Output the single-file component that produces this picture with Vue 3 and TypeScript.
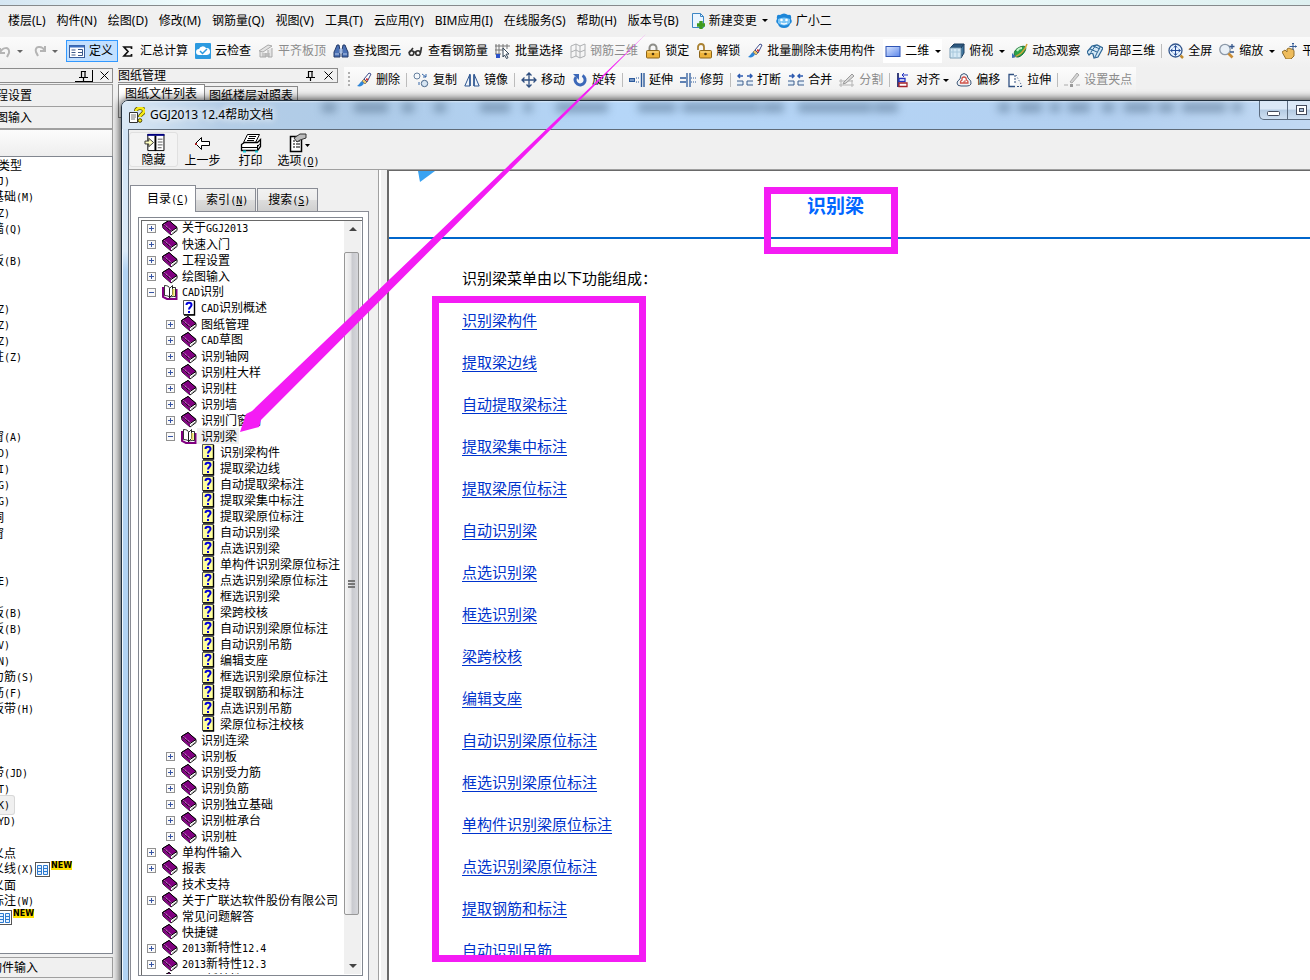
<script setup lang="ts">
import { h, ref } from 'vue'

interface Tool {
  label: string
  icon: string
  caret?: boolean
  off?: boolean
  sep?: boolean
  group?: boolean
}

interface Node {
  label: string
  depth: number
  kind: 'book' | 'open' | 'page' | 'newpage'
  sign?: '+' | '-'
}

const Mixed = (props: { text: string }) =>
  (props.text.match(/[\x20-\x7e]+|[^\x20-\x7e]+/g) ?? []).map((run) =>
    /^[\x20-\x7e]/.test(run) ? h('span', { class: 'mono' }, run) : run,
  )
Mixed.props = ['text']

const brush =
  '<path d="M1 14c3 1 6 0 7-3l-2-2c-2 1-2 3-5 5z" fill="#2f86d8"/><path d="M6 9l2-2 3 3-2 2z" fill="#e9c46a" stroke="#555" stroke-width=".6"/><path d="M8 7l5-6 2 1-4 8z" fill="#fff" stroke="#3b4a8a"/><path d="M10 7l2 1" stroke="#c33" stroke-width="2"/>'

const icons: Record<string, string> = {
  undo: '<path d="M3 5v5h5M3 10c2-6 10-7 9 0l-2 4" fill="none" stroke="#b4b4b4" stroke-width="2"/>',
  redo: '<path d="M13 3v5H8M13 8C10 2 2 3 4 9l2 4" fill="none" stroke="#b4b4b4" stroke-width="2"/>',
  define:
    '<rect x=".5" y="2.500" width="15" height="12" fill="#fff" stroke="#3a5f9c"/><path d="M1 3.500h14" stroke="#3a6fc0" stroke-width="2"/><path d="M2.500 7h4M2.500 9.500h4M2.500 12h4M9 6.500h4.500v6H9M9 9.500h4" fill="none" stroke="#3d5a8a"/>',
  sigma: '<path d="M11.500 6V4H4l4 4.500L4 13h7.500v-2" fill="none" stroke="#111" stroke-width="1.700"/>',
  cloud:
    '<rect width="16" height="16" rx="1" fill="#2c9ae0"/><path d="M4 12a3 3 0 0 1 0-6 4 4 0 0 1 7-1 3.500 3.500 0 0 1 1 7z" fill="#fff"/><path d="M5 8l2.500 2.500L12 6" fill="none" stroke="#2c9ae0" stroke-width="1.500"/>',
  slab: '<path d="M1 8l9-6 4 1-9 6zM2 9v5h6v-4M10 7v7h4V5M4 11h8M4 13h8" fill="#e4e4e4" stroke="#a9a9a9"/>',
  find: '<path d="M2 7l2-5h2l1 5v7H1V9zM14 7l-2-5h-2L9 7v7h6V9z" fill="#4a70b4" stroke="#253a68"/><path d="M7 6h2v4H7zM2 11h4M10 11h4" fill="#8aa8d8" stroke="#b9cbe8"/>',
  glasses:
    '<g fill="none" stroke="#333" stroke-width="1.600"><circle cx="3.500" cy="10" r="2.300"/><circle cx="10" cy="10" r="2.300"/><path d="M1 10l4-5M12.500 10l1-6M6 9h2"/></g>',
  batch:
    '<path d="M1 1v10M4 1v13M8 1v5M12 1v5M0 3h15M0 7h9M0 11h6" stroke="#777"/><rect x="1" y="11" width="4" height="4" fill="#2a51c9"/><path d="M8 5l6 6-3 .2 2 3.500-1.500.8-2-3.500L8 14z" fill="#fff" stroke="#345"/>',
  grid3d: '<path d="M1 3l5-2v12l-5 2zM6 1l4 2v12l-4-2M10 3l5-2v12l-5 2M1 9l5-2 4 2 5-2" fill="none" stroke="#aeb0b2"/>',
  lock: '<path d="M4.500 8V5a3.500 3.500 0 0 1 7 0v3" fill="none" stroke="#8d8d88" stroke-width="2"/><rect x="1.500" y="7.500" width="13" height="7.500" rx="1" fill="#eeb33a" stroke="#8d6518"/><path d="M2.500 9h11" stroke="#fde39b"/><circle cx="8" cy="11" r="1.300" fill="#4c3510"/>',
  unlock:
    '<path d="M2 7V4a2.500 2.500 0 0 1 6 0v3" fill="none" stroke="#a98132" stroke-width="1.800"/><rect x="3.500" y="7.500" width="12" height="7.500" rx="1" fill="#eeb33a" stroke="#8d6518"/><path d="M4.500 9h10" stroke="#fde39b"/><circle cx="9.500" cy="11" r="1.300" fill="#4c3510"/>',
  brush,
  rect: '<defs><linearGradient id="rg" x2="1" y2="1"><stop stop-color="#dce8ff"/><stop offset="1" stop-color="#5b86ea"/></linearGradient></defs><rect x="1" y="3.500" width="14" height="10" fill="url(#rg)" stroke="#2f55b5"/>',
  cube: '<path d="M1 5l4-4h10l-3 4z" fill="#2c587f" stroke="#1d3d5e"/><path d="M12 5l3-4v9l-3 5z" fill="#3f779f" stroke="#1d3d5e"/><path d="M1 5h11v10H1z" fill="#d6e9f5" stroke="#7b9db5"/><path d="M4 5v10M8 5v10M1 9h11" stroke="#a8c8dc"/>',
  orbit:
    '<path d="M3 13C1 10 3 6 8 4s7 0 5 4-7 8-10 5z" fill="#2ba34a" stroke="#176b34"/><path d="M5 8c1-2 3-3 5-3" stroke="#bff0c4" stroke-width="2" fill="none"/><path d="M1 14c6-1 12-6 14-13" fill="none" stroke="#d2a338" stroke-width="1.500"/><path d="M0 10l4 4-4 1z" fill="#3a6fb8"/>',
  part3d:
    '<path d="M0 9l5-6 5-1 6 3-5 9-4 1-1-4-2-1-2 2z" fill="#d4e8f6" stroke="#2c6594" stroke-width="1.200"/><path d="M3 6l7 3M6 3l7 3M9 2L4 9M13 4l-5 10" stroke="#2c6594" fill="none"/>',
  full: '<circle cx="7.500" cy="7.500" r="6.500" fill="#e6f2ff" stroke="#33568c" stroke-width="1.300"/><path d="M7.500 3v9M3 7.500h9M6 4.500l1.500-2L9 4.500M6 10.500l1.500 2 1.500-2M4.500 6l-2 1.500 2 1.500M10.500 6l2 1.500-2 1.500" stroke="#244b96" fill="none"/><path d="M12.500 12.500l2.500 2.500" stroke="#c08a2e" stroke-width="2.500"/>',
  zoom: '<circle cx="6" cy="6.500" r="5.200" fill="#e9f0f7" stroke="#8d99a8" stroke-width="1.300"/><path d="M9.500 10.500l4 4" stroke="#c98c35" stroke-width="2.600"/><path d="M13 1v5M10.500 3.500h5M11 9h4" stroke="#33568c" stroke-width="1.300"/>',
  pan: '<path d="M0 9l3-2 2 2 0-3 2-1 2 1 2 0 1 2 0 5-3 3H4z" fill="#eebc5c" stroke="#93702d"/><path d="M11 0v7M7.500 3.500h7M10 1l1-1 1 1M13.500 2.500l1 1-1 1" stroke="#345a94" fill="none"/>',
  copy: '<circle cx="4" cy="4" r="3" fill="#f4f8fc" stroke="#66809e"/><circle cx="11.500" cy="11.500" r="3.200" fill="#d7e5f2" stroke="#4a6788"/><path d="M9 2l4 3M13 2v3h-3M6 10v3" stroke="#3466a8" fill="none"/>',
  mirror: '<path d="M6 2v12H.800zM10 2v12h5.200z" fill="#eef4fb" stroke="#2f5791"/><path d="M6 3v11M10 3v11" stroke="#2f5791" stroke-width="1.500"/>',
  move: '<path d="M8 1v14M1 8h14M5.500 3.500L8 1l2.500 2.500M5.500 12.500L8 15l2.500-2.500M3.500 5.500L1 8l2.500 2.500M12.500 5.500L15 8l-2.500 2.500" fill="none" stroke="#2f4f80" stroke-width="1.300"/>',
  rotate: '<path d="M10.500 3.500A5 5 0 1 1 4 5" fill="none" stroke="#3c68b8" stroke-width="3"/><path d="M1 2h6v6z" fill="#3c68b8"/>',
  extend: '<path d="M0 6h6v4H0z" fill="#2c5a9c"/><path d="M1 8h4" stroke="#bfd6f2"/><path d="M7 6h4M7 10h4" stroke="#2c5a9c" stroke-dasharray="1 1"/><path d="M12.500 1v14M15 1v14" stroke="#2c5a9c" stroke-width="1.400"/>',
  trim: '<path d="M0 6h6M0 10h6" stroke="#2c5a9c" stroke-width="1.300"/><path d="M7 1v14M10 1v14" stroke="#2c5a9c" stroke-width="1.300"/><path d="M11 6h5M11 10h5" stroke="#2c5a9c" stroke-dasharray="1 1"/>',
  split: '<path d="M0 9h6v4H0M16 9h-6v4h6" fill="#e2edf8" stroke="#3d5f8d"/><path d="M1 4h5M15 4h-5M3 2L1 4l2 2M13 2l2 2-2 2" fill="none" stroke="#2c5ab0" stroke-width="1.500"/>',
  join: '<path d="M0 9h6v4H0M16 9h-6v4h6" fill="#e2edf8" stroke="#3d5f8d"/><path d="M1 4h5M15 4h-5M4 2l2 2-2 2M12 2l-2 2 2 2" fill="none" stroke="#2c5ab0" stroke-width="1.500"/>',
  cut: '<path d="M0 9h14M0 13h15M2 7v8M13 8v7" stroke="#b5b5b5"/><path d="M5 10l8-8 2 2-8 7-3 1z" fill="#d9d9d9" stroke="#9b9b9b"/>',
  align: '<path d="M2 1v14" stroke="#222a6b" stroke-width="1.800"/><path d="M12 3H6M8 1L6 3l2 2" fill="none" stroke="#2233c0"/><path d="M3 6.500h6v3H3z" fill="#fff" stroke="#2233c0" stroke-width="1.300"/><path d="M3 11h8v3.500H3z" fill="#fff" stroke="#a3222c" stroke-width="1.300"/>',
  offset: '<path d="M5 3q3-3 6 0l1 3q4 3 3 6-1 2-4 2H5q-4 0-4-3 0-2 3-4z" fill="#eef1f5" stroke="#3e5878"/><path d="M6 6q2-2 4 0l.5 2q2 1 1.500 3H4.500Q4 9 6 8z" fill="#fff" stroke="#d05248" stroke-width="1.300"/><path d="M7 10h2V8" stroke="#d05248" fill="none"/>',
  stretch: '<path d="M7 2.500H2v12h6" fill="#fff" stroke="#2f4f80" stroke-width="1.300"/><path d="M8 3v9M10 14.500h5" fill="none" stroke="#2f4f80" stroke-dasharray="2 1"/><path d="M9 3l6 11" stroke="#2f4f80" stroke-dasharray="1 2"/>',
  grip: '<path d="M0 13h4M12 13h4" stroke="#aaa"/><path d="M6 10l7-9 2 2-7 8z" fill="#d4d4d4" stroke="#aaa"/><rect x="6" y="12" width="3" height="3" fill="#999"/>',
  newdoc: '<path d="M2.500.500h8l3 3v11h-11z" fill="#eaf5ff" stroke="#3c86c4"/><path d="M10.500.500v3h3" fill="none" stroke="#3c86c4"/><path d="M11 8v8M7 12h8" stroke="#3f9b1f" stroke-width="3.400"/>',
  mascot:
    '<path d="M1 6Q0 1 4 2q4-3 8 0 4-1 3 4 2 3-1 5-1 4-6 4t-6-4Q-1 9 1 6z" fill="#1d86d8"/><path d="M2 6q6-3 12 0v4q-6 5-12 0z" fill="#7cc6f6"/><circle cx="5.500" cy="7" r="1.300" fill="#fff"/><circle cx="10.500" cy="7" r="1.300" fill="#fff"/><path d="M5 10q3 2 6 0" stroke="#fff" stroke-width="1.300" fill="none"/>',
}

const menus = ['楼层(L)', '构件(N)', '绘图(D)', '修改(M)', '钢筋量(Q)', '视图(V)', '工具(T)', '云应用(Y)', 'BIM应用(I)', '在线服务(S)', '帮助(H)', '版本号(B)']

const mainTools: Tool[] = [
  { label: '汇总计算', icon: 'sigma' },
  { label: '云检查', icon: 'cloud' },
  { label: '平齐板顶', icon: 'slab', off: true },
  { label: '查找图元', icon: 'find' },
  { label: '查看钢筋量', icon: 'glasses' },
  { label: '批量选择', icon: 'batch' },
  { label: '钢筋三维', icon: 'grid3d', off: true },
  { label: '锁定', icon: 'lock' },
  { label: '解锁', icon: 'unlock' },
  { label: '批量删除未使用构件', icon: 'brush' },
]

const viewTools: Tool[] = [
  { label: '二维', icon: 'rect', caret: true, group: true },
  { label: '俯视', icon: 'cube', caret: true },
  { label: '动态观察', icon: 'orbit' },
  { label: '局部三维', icon: 'part3d', sep: true },
  { label: '全屏', icon: 'full' },
  { label: '缩放', icon: 'zoom', caret: true },
  { label: '平移', icon: 'pan' },
]

const editTools: Tool[] = [
  { label: '删除', icon: 'brush', sep: true },
  { label: '复制', icon: 'copy' },
  { label: '镜像', icon: 'mirror', sep: true },
  { label: '移动', icon: 'move' },
  { label: '旋转', icon: 'rotate', sep: true },
  { label: '延伸', icon: 'extend' },
  { label: '修剪', icon: 'trim', sep: true },
  { label: '打断', icon: 'split' },
  { label: '合并', icon: 'join' },
  { label: '分割', icon: 'cut', off: true, sep: true },
  { label: '对齐', icon: 'align', caret: true },
  { label: '偏移', icon: 'offset' },
  { label: '拉伸', icon: 'stretch', sep: true },
  { label: '设置夹点', icon: 'grip', off: true },
]

const parts = [
  '轴网(J)', '筏板基础(M)', '框柱(Z)', '剪力墙(Q)', '', '现浇板(B)', '', '',
  '框柱(Z)', '暗柱(Z)', '端柱(Z)', '构造柱(Z)', '', '', '', '',
  '门联窗(A)', '墙洞(D)', '壁龛(I)', '连梁(G)', '过梁(G)', '带形洞', '带形窗', '', '',
  '圈梁(E)', '', '现浇板(B)', '螺旋板(B)', '柱帽(V)', '板洞(N)', '板受力筋(S)', '板负筋(F)', '楼层板带(H)', '', '', '',
  '后浇带(JD)', '承台(T)', '基坑(K)', '垫层(YD)', '', '自定义点', '自定义线(X)', '自定义面', '尺寸标注(W)', '+',
]

const selectedPart = 39

const helpTools = [
  { id: 'hide', label: '隐藏', key: '' },
  { id: 'back', label: '上一步', key: '' },
  { id: 'print', label: '打印', key: '' },
  { id: 'options', label: '选项', key: 'O' },
]

const helpTabs = [
  { label: '目录', key: 'C' },
  { label: '索引', key: 'N' },
  { label: '搜索', key: 'S' },
]
const currentTab = ref(0)

const book = (label: string, depth: number, sign?: '+' | '-'): Node => ({ label, depth, kind: sign === '-' ? 'open' : 'book', sign })

const tree: Node[] = [
  book('关于GGJ2013', 0, '+'),
  book('快速入门', 0, '+'),
  book('工程设置', 0, '+'),
  book('绘图输入', 0, '+'),
  book('CAD识别', 0, '-'),
  { label: 'CAD识别概述', depth: 1, kind: 'page' },
  ...['图纸管理', 'CAD草图', '识别轴网', '识别柱大样', '识别柱', '识别墙', '识别门窗洞'].map((t) => book(t, 1, '+')),
  book('识别梁', 1, '-'),
  ...[
    '识别梁构件', '提取梁边线', '自动提取梁标注', '提取梁集中标注', '提取梁原位标注', '自动识别梁', '点选识别梁', '单构件识别梁原位标注',
    '点选识别梁原位标注', '框选识别梁', '梁跨校核', '自动识别梁原位标注', '自动识别吊筋', '编辑支座', '框选识别梁原位标注',
    '提取钢筋和标注', '点选识别吊筋', '梁原位标注校核',
  ].map((label): Node => ({ label, depth: 2, kind: 'newpage' })),
  book('识别连梁', 1),
  ...['识别板', '识别受力筋', '识别负筋', '识别独立基础', '识别桩承台', '识别桩'].map((t) => book(t, 1, '+')),
  book('单构件输入', 0, '+'),
  book('报表', 0, '+'),
  book('技术支持', 0),
  book('关于广联达软件股份有限公司', 0, '+'),
  book('常见问题解答', 0),
  book('快捷键', 0),
  book('2013新特性12.4', 0, '+'),
  book('2013新特性12.3', 0, '+'),
  book('2013新特性12.2', 0, '+'),
]

const links = [
  '识别梁构件', '提取梁边线', '自动提取梁标注', '提取梁集中标注', '提取梁原位标注', '自动识别梁', '点选识别梁', '框选识别梁', '梁跨校核',
  '编辑支座', '自动识别梁原位标注', '框选识别梁原位标注', '单构件识别梁原位标注', '点选识别梁原位标注', '提取钢筋和标注', '自动识别吊筋',
]

const haze = [
  [200, 14], [232, 34], [280, 12], [312, 12], [358, 30], [402, 8], [434, 52], [516, 38], [560, 46], [600, 38], [640, 22], [676, 54], [720, 30], [752, 24],
  [876, 12], [896, 24], [928, 10], [946, 22], [980, 12], [1002, 28], [1036, 16], [1060, 44], [1110, 10],
]
</script>

<template>
  <main class="app">
    <div class="strip"></div>
    <nav class="menubar">
      <button v-for="m in menus" :key="m" class="plain">{{ m }}</button>
      <button class="tool change">
        <svg class="ico" viewBox="0 0 16 16" v-html="icons.newdoc"></svg><span>新建变更</span><i class="caret"></i>
      </button>
      <button class="tool"><svg class="ico" viewBox="0 0 16 16" v-html="icons.mascot"></svg><span>广小二</span></button>
    </nav>

    <div class="toolbar">
      <div class="history">
        <button class="tool off" aria-label="撤销"><svg class="ico" viewBox="0 0 16 16" v-html="icons.undo"></svg><i class="caret"></i></button>
        <button class="tool off" aria-label="恢复"><svg class="ico" viewBox="0 0 16 16" v-html="icons.redo"></svg><i class="caret"></i></button>
      </div>
      <button class="tool active"><svg class="ico" viewBox="0 0 16 16" v-html="icons.define"></svg><span>定义</span></button>
      <div class="set">
        <button v-for="t in mainTools" :key="t.label" class="tool" :class="{ off: t.off }">
          <svg class="ico" viewBox="0 0 16 16" v-html="icons[t.icon]"></svg><span>{{ t.label }}</span>
        </button>
      </div>
      <div class="set views">
        <template v-for="t in viewTools" :key="t.label">
          <button class="tool" :class="{ lit: t.group }">
            <svg class="ico" viewBox="0 0 16 16" v-html="icons[t.icon]"></svg><span>{{ t.label }}</span><i v-if="t.caret" class="caret"></i>
          </button>
          <i v-if="t.sep" class="sep"></i>
        </template>
      </div>
    </div>

    <div class="work">
      <aside class="dock">
        <header class="dockhead">
          <button class="pin boxed" aria-label="固定"><svg width="9" height="10" viewBox="0 0 9 10"><path d="M2.500 0v6M6 0v6M2 .500h5M0 6.500h9M4.500 7v3" stroke="#000" stroke-width="1.200" fill="none" /></svg></button>
          <button class="pin" aria-label="关闭"><svg width="9" height="9" viewBox="0 0 9 9"><path d="M.500.500l8 8M8.500.500l-8 8" stroke="#000" /></svg></button>
        </header>
        <button class="bar">工程设置</button>
        <button class="bar">绘图输入</button>
        <div class="fade"></div>
        <ul class="parts">
          <li class="head">构件类型</li>
          <li v-for="(p, i) in parts" :key="i">
            <span v-if="p === '+'" class="blank"></span>
            <span v-else :class="{ picked: i === selectedPart }"><Mixed :text="p" /></span>
            <template v-if="p === '+' || p === '自定义线(X)'">
              <svg class="sheet" width="15" height="15" viewBox="0 0 15 15"><rect x=".5" y=".5" width="14" height="14" fill="#fff" stroke="#555" /><path d="M2.500 3.500h4v9h-4zM8.500 3.500h4v9h-4z" fill="#e3f0ff" stroke="#2d7bd0" /><path d="M3 6.500h3M3 9.500h3M9 6.500h3M9 9.500h3" stroke="#2d7bd0" /></svg>
              <b class="new">NEW</b>
            </template>
          </li>
        </ul>
        <button class="bar last">单构件输入</button>
      </aside>

      <section class="sheets">
        <header class="dockhead">
          <h2>图纸管理</h2>
          <button class="pin" aria-label="固定"><svg width="9" height="10" viewBox="0 0 9 10"><path d="M2.500 0v6M6 0v6M2 .500h5M0 6.500h9M4.500 7v3" stroke="#000" stroke-width="1.200" fill="none" /></svg></button>
          <button class="pin" aria-label="关闭"><svg width="9" height="9" viewBox="0 0 9 9"><path d="M.500.500l8 8M8.500.500l-8 8" stroke="#000" /></svg></button>
        </header>
        <div class="sheettabs">
          <button class="on">图纸文件列表</button>
          <button>图纸楼层对照表</button>
        </div>
      </section>

      <div class="editbar">
        <i class="dots"></i>
        <template v-for="t in editTools" :key="t.label">
          <button class="tool" :class="{ off: t.off, tight: t.caret }">
            <svg class="ico" viewBox="0 0 16 16" v-html="icons[t.icon]"></svg><span>{{ t.label }}</span><i v-if="t.caret" class="caret"></i>
          </button>
          <i v-if="t.sep" class="sep"></i>
        </template>
      </div>
    </div>

    <section class="window">
      <header class="title">
        <svg class="haze" aria-hidden="true">
          <rect v-for="([x, w], i) in haze" :key="i" :x="x" y="2" :width="w" height="9" fill="#46627e" />
        </svg>
        <svg class="ico" viewBox="0 0 16 16"><path d="M.500 5.500h8v10h-8z" fill="#fff" stroke="#333" /><path d="M2 8h5M2 10h5M2 12h4" stroke="#777" /><path d="M7 4c0-4 8-4 8 0 0 3-4 3-4 6" fill="none" stroke="#4a4500" stroke-width="4" /><path d="M7 4c0-4 8-4 8 0 0 3-4 3-4 6" fill="none" stroke="#f6ea1a" stroke-width="2.600" /><circle cx="11" cy="13.500" r="1.800" fill="#f6ea1a" stroke="#4a4500" /></svg>
        <h1>GGJ2013 12.4帮助文档</h1>
        <div class="controls">
          <button aria-label="最小化"><svg width="13" height="13" viewBox="0 0 13 13"><rect x=".5" y="7.500" width="12" height="4" rx="1" fill="#fff" stroke="#444b5c" /></svg></button>
          <button aria-label="最大化"><svg width="13" height="13" viewBox="0 0 13 13"><rect x="1.500" y="1.500" width="10" height="9" fill="#fff" stroke="#444b5c" /><rect x="4.500" y="4.500" width="4" height="3" fill="#a9bdd6" stroke="#444b5c" /></svg></button>
          <button aria-label="关闭窗口"></button>
        </div>
      </header>

      <div class="client">
        <div class="helpbar">
          <button v-for="(t, i) in helpTools" :key="t.id" :class="{ hot: i === 0 }">
            <svg width="22" height="20" viewBox="0 0 22 20">
              <g v-if="t.id === 'hide'"><path d="M4.500 1.500h17v17h-17z" fill="#fff" stroke="#000" /><path d="M4 2h18" stroke="#000080" stroke-width="2" /><path d="M12.500 3v16" stroke="#000" stroke-width="2" /><path d="M15 6.500h5M15 9.500h5M15 12.500h5M15 15.500h4" stroke="#555" /><path d="M1.500 8.500h4v-3l5 4.500-5 4.500v-3h-4z" fill="#ffffc0" stroke="#333" /></g>
              <g v-else-if="t.id === 'back'"><path d="M3.500 10.500l6-6v4h8v4h-8v4z" fill="#fff" stroke="#000" /><path d="M3 10h2v2H3z" fill="#a22" /></g>
              <g v-else-if="t.id === 'print'"><path d="M7.500 1.500h12l-4 8h-12z" fill="#fff" stroke="#000" /><path d="M9 3.500h7M8 5.500h7M7 7.500h7" stroke="#000" /><path d="M1.500 11.500l3-2h13l3-3v7l-3 4h-16z" fill="#fff" stroke="#000" stroke-width="1.300" /><path d="M2 14.500h15l3-4M17.500 12v6" stroke="#000" fill="none" /><path d="M3 18.500h3M15 18.500h3" stroke="#19c8d8" stroke-width="2" /></g>
              <g v-else><path d="M2.500 3.500h11v15h-11z" fill="#fff" stroke="#000" stroke-width="1.500" /><path d="M5 8h2M8 8h4M5 11h2M8 11h4M5 14h2M8 14h4" stroke="#000" /><path d="M6 5l6-4 6 0v4l-6 2-3 2z" fill="#bbb" stroke="#333" /><path d="M17 11h5l-2.500 3z" fill="#000" /></g>
            </svg>
            <span>{{ t.label }}<span v-if="t.key" class="mono">(<u>{{ t.key }}</u>)</span></span>
          </button>
        </div>

        <div class="panes">
          <div class="nav">
            <div class="tabs" role="tablist">
              <button v-for="(t, i) in helpTabs" :key="t.key" role="tab" :aria-selected="i === currentTab" :class="{ on: i === currentTab }" @click="currentTab = i">
                {{ t.label }}<span class="mono">(<u>{{ t.key }}</u>)</span>
              </button>
            </div>
            <div class="page">
              <div class="treebox">
                <ul class="tree" role="tree">
                  <li v-for="(n, i) in tree" :key="i" role="treeitem" :class="'d' + n.depth">
                    <button v-if="n.sign" class="sign" :aria-label="n.sign === '+' ? '展开' : '折叠'">
                      <svg width="9" height="9" viewBox="0 0 9 9"><rect x=".5" y=".5" width="8" height="8" fill="#fafafa" stroke="#919191" /><path d="M2 4.500h5" stroke="#3654a5" /><path v-if="n.sign === '+'" d="M4.500 2v5" stroke="#3654a5" /></svg>
                    </button>
                    <i v-else class="sign"></i>
                    <svg class="ico" viewBox="0 0 16 16">
                      <g v-if="n.kind === 'book'"><path d="M.500 4.500L7 .500l8 7v3l-6 4.500-8-7z" fill="#fff" stroke="#000" /><path d="M.500 4.500L7 .500l8 7L9 11.500z" fill="#800080" stroke="#000" /><path d="M1 5l8 7v3L1 8z" fill="#800080" /><path d="M2.500 4.500l7 6" stroke="#e9b9e9" stroke-dasharray="1 1" /><path d="M10 13.500l5-4" stroke="#999" /></g>
                      <g v-else-if="n.kind === 'open'"><path d="M1 3v10l4 2h9.500V5" fill="none" stroke="#800080" stroke-width="2" /><path d="M2.500 1.500c3 0 5 1 5 3v9c0-1-2-2-5-2z" fill="#fff" stroke="#000" stroke-width=".8" /><path d="M7.500 4.500l3-3v9l-3 3zM10 3.500h3.500v9c-3 0-5 0-6 1" fill="#fff" stroke="#000" stroke-width=".8" /><path d="M11.500 5v7" stroke="#e8dc5a" stroke-width="2" /></g>
                      <g v-else><path d="M2.500.500h11v14h-11z" :fill="n.kind === 'newpage' ? '#ffff9c' : '#fff'" stroke="#555" /><path d="M13.500 1v14H3" fill="none" stroke="#000" stroke-width="1.400" /><path d="M5.500 5c0-3 5-3 5 0 0 2-2.500 2-2.500 4.500M8 11v2" fill="none" stroke="#0000d8" stroke-width="2" /></g>
                    </svg>
                    <span class="label" :class="{ current: n.label === '识别梁' }"><Mixed :text="n.label" /></span>
                  </li>
                </ul>
                <div class="scroll" aria-hidden="true">
                  <i class="arrow up"></i>
                  <div class="track"><div class="thumb"><i></i><i></i><i></i></div></div>
                  <i class="arrow down"></i>
                </div>
              </div>
            </div>
          </div>

          <div class="splitter"></div>

          <article class="doc">
            <header class="dochead">
              <svg class="logo" width="17" height="11" viewBox="0 0 17 11"><path d="M0 0h17L2 11z" fill="#38a2f2" /></svg>
              <h2>识别梁</h2>
            </header>
            <div class="body">
              <p>识别梁菜单由以下功能组成：</p>
              <p v-for="l in links" :key="l"><a href="#">{{ l }}</a></p>
            </div>
          </article>
        </div>
      </div>
    </section>

    <svg class="marks" aria-hidden="true">
      <rect x="767.500" y="190.500" width="127" height="60" />
      <rect x="435.500" y="299.500" width="207" height="659" />
      <polygon points="646,34 252,411 246,414 240,432 259,427 261,420" />
    </svg>
  </main>
</template>

<style>
html,
body {
  height: 100%;
  overflow: hidden;
}
#app {
  height: 100%;
}
.mono {
  font-family: 'DejaVu Sans Mono', monospace;
  font-size: 10px;
}
</style>

<style scoped>
.app {
  position: relative;
  display: flex;
  flex-direction: column;
  height: 100%;
  overflow: hidden;
  background: #f0f0f0;
  color: #000;
  font: 12px/16px 'Noto Sans', 'Noto Sans CJK SC', sans-serif;
}
button {
  margin: 0;
  padding: 0;
  border: 0;
  background: none;
  color: inherit;
  font: inherit;
  white-space: nowrap;
}
h1,
h2,
p,
ul {
  margin: 0;
  padding: 0;
  font-size: 12px;
  font-weight: 400;
  list-style: none;
}
.strip {
  flex: none;
  height: 5px;
  border-bottom: 1px solid #868a8c;
  background: linear-gradient(90deg, #d5e6f2, #effcfc 15%, #dff2f2 45%, #f2fdfd 60%, #def0f0);
}
.menubar {
  flex: none;
  display: flex;
  align-items: center;
  gap: 11px;
  height: 29px;
  padding: 0 0 2px 8px;
}
.tool {
  flex: none;
  display: flex;
  align-items: center;
  gap: 4px;
}
.menubar .change {
  gap: 3px;
  margin-right: -3px;
}
.ico {
  flex: none;
  width: 16px;
  height: 16px;
}
.caret {
  width: 0;
  margin-left: 2px;
  border: 3px solid transparent;
  border-top-color: #000;
  border-bottom: 0;
}
.off {
  color: #8c8c8c;
}
.off .caret {
  border-top-color: #666;
}
.toolbar {
  flex: none;
  display: flex;
  align-items: center;
  height: 28px;
  padding-bottom: 2px;
  background: linear-gradient(#fbfbfb, #f0f0f0);
}
.history {
  flex: none;
  display: flex;
  gap: 9px;
  box-sizing: border-box;
  width: 66px;
  padding-right: 8px;
  overflow: hidden;
  justify-content: flex-end;
}
.history .tool {
  gap: 2px;
}
.active {
  height: 22px;
  padding: 0 4px 0 2px;
  border: 1px solid #3399ff;
  background: #c2e0ff;
}
.set {
  flex: none;
  display: flex;
  align-items: center;
  gap: 7px;
  padding-left: 2px;
}
.set.views {
  padding-left: 8px;
}
.lit {
  height: 24px;
  padding: 0 1px 0 2px;
  background: #fff;
}
.sep {
  flex: none;
  width: 1px;
  height: 14px;
  background: #bcbcbc;
}
.views .sep,
.editbar .sep {
  margin: 0 -1px;
}
.work {
  flex: 1;
  display: flex;
  min-height: 0;
}
.dock {
  flex: none;
  display: flex;
  flex-direction: column;
  width: 113px;
  overflow: hidden;
  font-family: 'Noto Sans CJK SC', sans-serif;
}
.dockhead {
  flex: none;
  display: flex;
  align-items: center;
  justify-content: flex-end;
  gap: 9px;
  height: 13px;
  margin: 1px 0 0;
  padding-right: 4px;
  border: 1px solid #8b8b8b;
  border-left: 0;
}
.dock .dockhead {
  gap: 7px;
  padding-right: 3px;
}
.dockhead h2 {
  flex: 1;
  line-height: 12px;
  padding-bottom: 2px;
}
.pin {
  display: flex;
}
.boxed {
  padding: 1px 4px 0 4px;
  border: 1px solid #000;
  border-width: 0 1px 1px 0;
}
.bar {
  flex: none;
  display: flex;
  align-items: center;
  height: 22px;
  padding-bottom: 2px;
  border: 1px solid #a0a0a0;
  border-width: 1px 1px 0 0;
  text-indent: -16px;
}
.dockhead + .bar {
  margin-top: 1px;
}
.fade {
  flex: none;
  height: 26px;
  border-top: 2px solid #a0a0a0;
  border-right: 1px solid #a0a0a0;
  background: linear-gradient(#fcfcfc, #eee);
}
.parts {
  flex: 1;
  min-height: 0;
  border: 1px solid #828790;
  border-width: 1px 1px 1px 0;
  background: #fff;
}
.parts li {
  display: flex;
  align-items: center;
  height: 16px;
  margin-left: -32px;
  white-space: nowrap;
}
.parts .head {
  padding-left: 6px;
}
.blank {
  width: 28px;
}
.picked {
  padding-right: 4px;
  border-radius: 2px;
  background: #f0f0f0;
  box-shadow: 0 0 0 1px #d8d8d8;
}
.sheet {
  flex: none;
  margin-left: 1px;
}
.new {
  align-self: flex-start;
  margin-left: 1px;
  background: #ffe100;
  font: 700 8px/9px 'DejaVu Sans', sans-serif;
}
.last {
  height: 21px;
  margin: 3px 0 2px;
  border-bottom-width: 1px;
  text-indent: -22px;
}
.sheets {
  flex: none;
  width: 220px;
  margin-left: 5px;
  font-family: 'Noto Sans CJK SC', sans-serif;
}
.sheettabs {
  display: flex;
  align-items: flex-end;
  height: 34px;
  margin-top: 1px;
  border-left: 1px solid #888;
}
.sheettabs button {
  height: 32px;
  padding: 0 4px 16px;
  border: 1px solid #888;
  border-left: 0;
  line-height: 16px;
}
.sheettabs .on {
  height: 34px;
  padding: 0 7px 18px 6px;
  background: #fff;
}
.editbar {
  display: flex;
  align-items: center;
  gap: 7px;
  height: 26px;
  margin-left: 6px;
  padding: 0 4px;
  background: linear-gradient(#fcfcfc, #f0f0f0);
}
.editbar .tight {
  gap: 1px;
}
.editbar .tight .ico {
  margin-right: 3px;
}
.dots {
  flex: none;
  width: 2px;
  height: 16px;
  margin-right: -1px;
  background: repeating-linear-gradient(#b0b0b0 0 2px, transparent 2px 4px);
}
.window {
  position: absolute;
  top: 100px;
  right: -54px;
  bottom: -30px;
  left: 121px;
  display: flex;
  flex-direction: column;
  padding-left: 6px;
  border: 1px solid #22303e;
  border-radius: 7px 7px 0 0;
  background: linear-gradient(#cfe2f5, #dcebf8 150px, #b2d3f3 170px);
  box-shadow: inset 1px 1px 0 #f2f8fe, 0 0 8px 1px rgba(0, 0, 0, 0.75);
}
.title {
  position: relative;
  flex: none;
  display: flex;
  align-items: center;
  gap: 5px;
  height: 28px;
  margin-left: -6px;
  padding-left: 7px;
  overflow: hidden;
  border-radius: 6px 6px 0 0;
  background: linear-gradient(rgba(255, 255, 255, 0.5), transparent 2px), linear-gradient(90deg, #dbe9f6, #b4cde6 8%, #aecbe8 20%, #b5d6f8 40%, #b3d0f0 80%, #c5dbf3);
}
.title .ico,
.title h1 {
  position: relative;
}
.title h1 {
  text-shadow: 0 0 6px #fff, 0 0 10px #fff;
}
.haze {
  position: absolute;
  inset: 0;
  width: 100%;
  height: 100%;
  opacity: 0.5;
  filter: blur(4px);
}
.controls {
  position: relative;
  align-self: flex-start;
  display: flex;
  height: 18px;
  margin-left: auto;
  margin-right: 4px;
  border: 1px solid #5b6b7f;
  border-top: 0;
  border-radius: 0 0 5px 5px;
  background: linear-gradient(#dbe8f6 45%, #b4cae2 50%, #cfe0f2);
}
.controls button {
  display: flex;
  align-items: center;
  justify-content: center;
  width: 28px;
  border-right: 1px solid #5b6b7f;
}
.controls button:last-child {
  width: 42px;
  border: 0;
}
.client {
  flex: 1;
  display: flex;
  flex-direction: column;
  min-height: 0;
  border: 1px solid #5f6b78;
  border-bottom: 0;
  background: #f0f0f0;
  font-family: 'Noto Sans CJK SC', sans-serif;
}
.helpbar {
  flex: none;
  display: flex;
  height: 39px;
  border-bottom: 1px solid #a0a0a0;
}
.helpbar button {
  display: flex;
  flex-direction: column;
  align-items: center;
  width: 49px;
  margin-right: -1px;
  padding-top: 3px;
  line-height: 14px;
}
.helpbar .hot {
  margin: 2px 0 2px 0;
  padding-top: 0;
  border: 1px solid #e0e0e0;
  border-radius: 3px;
  background: #f3f3f3;
}
.panes {
  flex: 1;
  display: flex;
  min-height: 0;
}
.nav {
  flex: none;
  display: flex;
  flex-direction: column;
  width: 250px;
  padding: 15px 0 0 1px;
  box-sizing: border-box;
}
.tabs {
  display: flex;
  align-items: flex-end;
  gap: 1px;
  height: 26px;
}
.tabs button {
  height: 23px;
  padding: 0 7px 0 10px;
  border: 1px solid #898c95;
  border-bottom: 0;
  background: linear-gradient(#f2f2f2, #ebebeb 50%, #dddddd 50%, #cfcfcf);
}
.tabs .on {
  z-index: 1;
  height: 27px;
  margin: 0 -2px -1px 0;
  padding: 0 6px 1px 16px;
  background: #fff;
}
.page {
  flex: 1;
  min-height: 0;
  width: 239px;
  box-sizing: border-box;
  padding: 5px 5px 32px 7px;
  border: 1px solid #898c95;
  background: #fff;
}
.treebox {
  display: flex;
  height: 100%;
  box-sizing: border-box;
  padding: 0 1px 1px 0;
  border: 1px solid #828790;
  box-shadow: inset 2px 2px 0 #fff, inset 3px 3px 0 #696969;
}
.tree {
  flex: 1;
  min-width: 0;
  margin: 3px 0 0 3px;
  overflow: hidden;
}
.tree li {
  display: flex;
  align-items: center;
  height: 16px;
  padding-left: 5px;
  white-space: nowrap;
}
.tree li:first-child {
  margin-top: -1px;
}
.tree .d1 {
  padding-left: 24px;
}
.tree .d2 {
  padding-left: 43px;
}
.sign {
  flex: none;
  display: flex;
  width: 9px;
  height: 9px;
  margin-right: 6px;
}
.label {
  padding: 0 2px 0 4px;
}
.current {
  background: #f0f0f0;
}
.scroll {
  flex: none;
  display: flex;
  flex-direction: column;
  align-items: center;
  width: 17px;
  margin-top: 3px;
  background: #f0f0f0;
}
.arrow {
  width: 0;
  margin: 6px 0;
  border: 4px solid transparent;
}
.up {
  border-top: 0;
  border-bottom-color: #444;
}
.down {
  border-bottom: 0;
  border-top-color: #444;
}
.track {
  flex: 1;
  align-self: stretch;
  padding: 15px 2px 43px 0;
}
.thumb {
  display: flex;
  flex-direction: column;
  align-items: center;
  justify-content: center;
  gap: 1px;
  height: 100%;
  box-sizing: border-box;
  border: 1px solid #979797;
  border-radius: 2px;
  background: linear-gradient(90deg, #f5f5f5, #e4e4e6 45%, #c9cacf 55%, #d6d7db);
}
.thumb i {
  width: 7px;
  height: 2px;
  background: #777;
}
.splitter {
  flex: none;
  width: 6px;
  border-left: 2px solid #fff;
  box-shadow: -1px 0 0 #a0a0a0;
}
.doc {
  flex: 1;
  min-width: 0;
  overflow: hidden;
  border-top: 1px solid #696969;
  border-left: 2px solid #696969;
  background: #fff;
}
.dochead {
  height: 66px;
  padding: 0 109px 0 29px;
  border-bottom: 2px solid #0066cc;
}
.logo {
  display: block;
}
.dochead h2 {
  color: #0066ff;
  font-size: 19px;
  font-weight: 700;
  line-height: 24px;
  margin-top: 11px;
  text-align: center;
}
.body {
  padding: 28px 0 0 73px;
}
.body p {
  height: 22px;
  margin-bottom: 20px;
  font-size: 15px;
  line-height: 22px;
}
.body a {
  color: #0033cc;
  text-decoration: underline;
  text-decoration-thickness: 1px;
  text-underline-offset: 3px;
}
.marks {
  position: absolute;
  inset: 0;
  width: 100%;
  height: 100%;
  pointer-events: none;
  fill: none;
  stroke: #f41cf4;
  stroke-width: 7px;
}
.marks polygon {
  fill: #f41cf4;
  stroke: none;
}
</style>
